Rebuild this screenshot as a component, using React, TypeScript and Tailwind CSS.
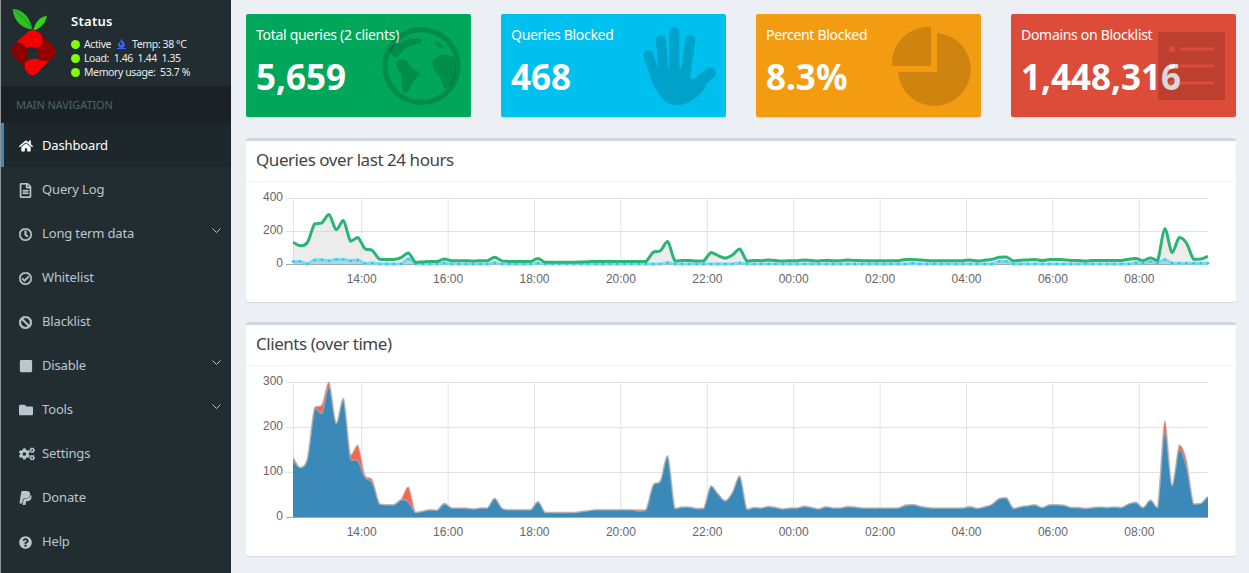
import { FaHome, FaRegFileAlt, FaRegClock, FaRegCheckCircle, FaBan, FaStop, FaFolder, FaCogs, FaPaypal, FaQuestionCircle, FaFire } from 'react-icons/fa'
import type { ReactNode } from 'react'

const X0 = 293
const STEP = 915 / 127

// total queries per 10 minutes, read off the chart
const totals = [131, 110, 130, 243, 249, 300, 208, 263, 138, 160, 93, 82, 29, 27, 27, 39, 67, 10, 13, 16, 15, 30, 20, 20, 20, 18, 20, 20, 41, 19, 16, 16, 16, 16, 34, 10, 10, 10, 10, 10, 12, 14, 16, 16, 16, 16, 16, 16, 16, 16, 71, 80, 136, 19, 22, 22, 19, 19, 69, 51, 36, 55, 91, 17, 21, 20, 24, 21, 18, 20, 20, 24, 21, 18, 23, 20, 20, 24, 22, 20, 20, 20, 20, 20, 20, 27, 28, 24, 21, 20, 20, 20, 20, 20, 24, 19, 23, 28, 41, 43, 19, 23, 25, 27, 21, 27, 27, 26, 21, 21, 19, 21, 22, 21, 22, 21, 29, 33, 21, 37, 21, 214, 70, 160, 127, 29, 30, 45]

// the part of each total coming from the second client
const secondClient: Record<number, number> = { 0: 8, 3: 2, 4: 19, 5: 10, 8: 11, 9: 35, 10: 5, 11: 6, 16: 33, 48: 3, 66: 1, 77: 2, 85: 2, 94: 2, 121: 24, 123: 10, 124: 15 }

const blocked: Record<number, number> = { 0: 15, 1: 15, 3: 25, 4: 26, 5: 20, 6: 27, 7: 28, 8: 20, 9: 24, 10: 3, 11: 6, 16: 30, 21: 6, 28: 8, 34: 6, 52: 8, 62: 6, 86: 4, 98: 16, 99: 16, 117: 8, 118: 6, 119: 14, 120: 6, 121: 26, 122: 6, 123: 5, 124: 5, 125: 5, 126: 5, 127: 5 }

const hours = ['14:00', '16:00', '18:00', '20:00', '22:00', '00:00', '02:00', '04:00', '06:00', '08:00']

function smooth(pts: number[][]) {
  let d = `M${pts[0][0]} ${pts[0][1]}`
  for (let i = 0; i < pts.length - 1; i++) {
    const p0 = pts[Math.max(i - 1, 0)]
    const p1 = pts[i]
    const p2 = pts[i + 1]
    const p3 = pts[Math.min(i + 2, pts.length - 1)]
    const c1y = Math.min(Math.max(p1[1] + (p2[1] - p0[1]) / 6, Math.min(p1[1], p2[1])), Math.max(p1[1], p2[1]))
    const c2y = Math.min(Math.max(p2[1] - (p3[1] - p1[1]) / 6, Math.min(p1[1], p2[1])), Math.max(p1[1], p2[1]))
    d += `C${(p1[0] + STEP / 3).toFixed(1)} ${c1y.toFixed(1)} ${(p2[0] - STEP / 3).toFixed(1)} ${c2y.toFixed(1)} ${p2[0].toFixed(1)} ${p2[1].toFixed(1)}`
  }
  return d
}

function seriesPath(values: number[], base: number, scale: number) {
  return smooth(values.map((v, i) => [X0 + i * STEP, base - v * scale]))
}

function area(d: string, base: number) {
  return `${d}L${X0 + 127 * STEP} ${base}L${X0} ${base}Z`
}

// svg coordinates below are page x, and y relative to the chart's own top
function Axes({ base, ticks, top, labelY }: { base: number; ticks: { label: string; y: number }[]; top: number; labelY: number }) {
  return (
    <>
      {ticks.map((t) => (
        <g key={t.label}>
          <line x1="286" x2="1208" y1={t.y + 0.5} y2={t.y + 0.5} stroke={t.label === '0' ? '#a8a8a8' : '#e2e2e2'} />
          <text x="283" y={t.y + 3} textAnchor="end" fontSize="12" fill="#666">{t.label}</text>
        </g>
      ))}
      <line x1={X0 + 0.5} x2={X0 + 0.5} y1={top} y2={base} stroke="#e2e2e2" />
      {hours.map((h, i) => {
        const x = 361.7 + i * 86.4
        return (
          <g key={h}>
            <line x1={x} x2={x} y1={top} y2={base} stroke="#e2e2e2" />
            <text x={x} y={labelY} textAnchor="middle" fontSize="12" fill="#666">{h}</text>
          </g>
        )
      })}
    </>
  )
}

function QueriesChart() {
  const base = 82
  const scale = 0.165
  const line = seriesPath(totals, base, scale)
  const blockedValues = totals.map((_, i) => blocked[i] ?? 0)
  const blockedLine = seriesPath(blockedValues, base, scale)
  return (
    <svg viewBox="246 0 990 120" className="block h-[120px] w-full" style={{ fontFamily: '"Liberation Sans", sans-serif' }}>
      <Axes base={base} top={16} labelY={101} ticks={[{ label: '400', y: 16 }, { label: '200', y: 49 }, { label: '0', y: 82 }]} />
      <path d={area(line, base)} fill="rgba(210,210,210,0.42)" />
      <path d={area(blockedLine, base)} fill="rgba(0,192,239,0.32)" />
      <path d={blockedLine} fill="none" stroke="#7dd8ee" strokeWidth="3" />
      {blockedValues.map((v, i) => (
        <circle key={i} cx={X0 + i * STEP} cy={base - v * scale} r="1.2" fill="#1ec8f0" />
      ))}
      <path d={line} fill="none" stroke="#2bb574" strokeWidth="3" strokeLinejoin="round" />
    </svg>
  )
}

function ClientsChart() {
  const base = 151
  const scale = 0.45
  const first = totals.map((v, i) => v - (secondClient[i] ?? 0))
  const red = seriesPath(totals, base, scale)
  const blue = seriesPath(first, base, scale)
  return (
    <svg viewBox="246 0 990 190" className="block h-[190px] w-full" style={{ fontFamily: '"Liberation Sans", sans-serif' }}>
      <Axes base={base} top={16} labelY={170} ticks={[{ label: '300', y: 16 }, { label: '200', y: 61 }, { label: '100', y: 106 }, { label: '0', y: 151 }]} />
      <path d={area(red, base)} fill="#f5664f" />
      <path d={area(blue, base)} fill="#3a89b8" />
      <path d={red} fill="none" stroke="rgba(190,190,190,0.55)" strokeWidth="1.5" />
      <path d={blue} fill="none" stroke="rgba(180,180,180,0.6)" strokeWidth="1.5" />
    </svg>
  )
}

function PiLogo() {
  return (
    <svg viewBox="30 25 140 205" className="h-[68px] w-[47px] shrink-0">
      <path d="M37 28C70 30 90 55 97 90C60 85 40 60 37 28Z" fill="#2fbf25" />
      <path d="M42 33C65 48 82 66 95 88" stroke="#17801a" strokeWidth="2" fill="none" />
      <path d="M100 92C105 65 120 52 140 48C138 70 120 88 100 92Z" fill="#33d41f" />
      <path d="M48 128L85 95C100 88 125 95 127 120C127 135 120 145 112 148C100 140 85 140 78 145C75 135 60 128 48 128Z" fill="#f40000" />
      <path d="M125 108L160 142C172 155 168 170 155 178C145 186 128 186 118 180C115 170 112 155 112 148C122 142 130 130 125 108Z" fill="#950000" />
      <path d="M118 180C125 185 135 185 148 183L110 222C98 232 85 228 78 215C72 205 72 195 75 188C85 178 105 175 118 180Z" fill="#f80000" />
      <path d="M48 130C60 128 75 135 78 145C85 160 82 175 75 188C72 195 72 200 75 205L42 172C30 160 30 145 48 130Z" fill="#8c0000" />
    </svg>
  )
}

function Dot() {
  return <span className="mr-[4px] inline-block h-[9px] w-[9px] shrink-0 rounded-full bg-[#7fff00]" />
}

function Chevron() {
  return (
    <svg viewBox="0 0 9 6" className="-mt-[7px] h-[6px] w-[9px]">
      <path d="M0.500 0.500L4.500 4.500L8.500 0.500" fill="none" stroke="currentColor" strokeWidth="1" />
    </svg>
  )
}

const navItems: { label: string; icon: ReactNode; arrow?: boolean; active?: boolean }[] = [
  { label: 'Dashboard', icon: <FaHome className="h-[14px] w-[14px]" />, active: true },
  { label: 'Query Log', icon: <FaRegFileAlt className="h-[15px] w-[13px] stroke-[10]" /> },
  { label: 'Long term data', icon: <FaRegClock className="h-[13px] w-[13px] stroke-[24]" />, arrow: true },
  { label: 'Whitelist', icon: <FaRegCheckCircle className="h-[13px] w-[13px] stroke-[24]" /> },
  { label: 'Blacklist', icon: <FaBan className="h-[13px] w-[13px] stroke-[24]" /> },
  { label: 'Disable', icon: <FaStop className="h-[14px] w-[14px]" />, arrow: true },
  { label: 'Tools', icon: <FaFolder className="h-[14px] w-[14px]" />, arrow: true },
  { label: 'Settings', icon: <FaCogs className="h-[16px] w-[16px]" /> },
  { label: 'Donate', icon: <FaPaypal className="h-[16px] w-[13px]" /> },
  { label: 'Help', icon: <FaQuestionCircle className="h-[13px] w-[13px]" /> },
]

function Sidebar() {
  return (
    <aside className="w-[231px] shrink-0 self-stretch border-l border-[#8f9599] bg-[#222d32]">
      <div className="flex h-[86px] pt-[8px] pl-[9px]">
        <PiLogo />
        <div className="ml-[14px] text-white">
          <p className="mt-[5px] text-[13px] leading-[16px] font-semibold tracking-[0.3px]">Status</p>
          <div className="mt-[8px] text-[10.5px] leading-[14px] tracking-[-0.4px] text-[#e8ecee]">
            <p className="flex items-center whitespace-nowrap"><Dot />Active<FaFire className="mx-[6px] h-[10px] w-[9px] border-b border-[#3366ff] text-[#3366ff]" />Temp: 38 °C</p>
            <p className="flex items-center whitespace-nowrap"><Dot />Load:&nbsp; 1.46&nbsp; 1.44&nbsp; 1.35</p>
            <p className="flex items-center whitespace-nowrap"><Dot />Memory usage:&nbsp; 53.7 %</p>
          </div>
        </div>
      </div>
      <div className="h-[37px] bg-[#1a2226] pl-[15px] text-[11px] leading-[37px] tracking-[-0.1px] text-[#4b646f]">MAIN NAVIGATION</div>
      <nav>
        {navItems.map((item) => (
          <a
            key={item.label}
            className={`flex h-[44px] items-center border-l-[3px] pt-[2px] pr-[10px] pl-[15px] text-[13px] ${item.active ? 'border-[#3c8dbc] bg-[#1e282c] text-white' : 'border-transparent text-[#b8c7ce]'}`}
          >
            <span className="flex w-[23px] shrink-0 items-center">{item.icon}</span>
            <span className="flex-1 tracking-[-0.15px]">{item.label}</span>
            {item.arrow && <Chevron />}
          </a>
        ))}
      </nav>
    </aside>
  )
}

function StatBox({ title, value, color, icon }: { title: string; value: string; color: string; icon: ReactNode }) {
  return (
    <div className={`relative h-[103px] overflow-hidden rounded-[2px] px-[10px] pt-[11px] text-white shadow-[0_1px_1px_rgba(0,0,0,0.1)] ${color}`}>
      <p className="text-[14px] leading-[20px] tracking-[-0.3px] whitespace-nowrap">{title}</p>
      <p className="mt-[7px] text-[35px] leading-[50px] font-bold whitespace-nowrap">{value}</p>
      {icon}
    </div>
  )
}

function GlobeIcon() {
  return (
    <svg viewBox="425 66 238 236" className="absolute top-[13px] left-[136px] h-[79px] w-[79px]">
      <g fill="rgba(0,0,0,0.15)">
        <path fillRule="evenodd" d="M426 183a118 118 0 1 0 236 0a118 118 0 1 0-236 0ZM442 183a102 102 0 1 1 204 0a102 102 0 1 1-204 0Z" />
        <path d="M445 132C452 118 470 118 490 108C505 100 522 96 545 102C548 110 538 118 528 116C520 124 505 120 498 128C490 132 488 142 478 148C470 160 462 156 452 148Z" />
        <path d="M468 172C480 160 496 160 505 172C510 192 528 195 540 205C530 218 518 228 512 242C508 256 498 268 490 262C484 245 482 225 484 205C476 200 466 188 468 172Z" />
        <path d="M578 168C590 150 612 142 640 155C650 170 650 205 642 225C632 240 622 252 612 250C606 232 600 212 592 205C584 198 576 185 578 168Z" />
        <path d="M585 108C595 108 606 118 612 128C604 132 590 124 585 108Z" />
      </g>
    </svg>
  )
}

function HandIcon() {
  return (
    <svg viewBox="1205 60 230 245" className="absolute top-[11px] left-[140.700px] h-[81.700px] w-[76.700px] opacity-15">
      <g fill="#000" stroke="#000" strokeLinecap="round">
        <path d="M1245 240C1255 280 1280 300 1310 300C1350 300 1375 275 1400 240L1345 215L1345 190L1240 190Z" strokeWidth="0" />
        <line x1="1224" y1="150" x2="1255" y2="240" strokeWidth="30" fill="none" />
        <line x1="1262" y1="105" x2="1270" y2="210" strokeWidth="30" fill="none" />
        <line x1="1302" y1="82" x2="1302" y2="210" strokeWidth="30" fill="none" />
        <line x1="1350" y1="105" x2="1335" y2="210" strokeWidth="30" fill="none" />
        <line x1="1345" y1="258" x2="1410" y2="204" strokeWidth="34" fill="none" />
      </g>
    </svg>
  )
}

function PieIcon() {
  return (
    <svg viewBox="441 66 237 237" className="absolute top-[13px] left-[136px] h-[79px] w-[79px]">
      <g fill="rgba(0,0,0,0.15)">
        <path d="M558 66V183H441A109.500 109.500 0 0 1 558 66Z" />
        <path d="M576 201V84A109.500 109.500 0 1 1 459 201Z" />
      </g>
    </svg>
  )
}

function ListIcon() {
  return (
    <svg viewBox="0 0 67 68" className="absolute top-[18px] left-[147px] h-[68px] w-[67px]">
      <path fillRule="evenodd" d="M0 0H67V68H0ZM11 17a3 3 0 1 0 6 0a3 3 0 1 0-6 0ZM22 15.500V18.500H56V15.500ZM11 34a3 3 0 1 0 6 0a3 3 0 1 0-6 0ZM22 32.500V35.500H56V32.500ZM11 51a3 3 0 1 0 6 0a3 3 0 1 0-6 0ZM22 49.500V52.500H56V49.500Z" fill="rgba(0,0,0,0.15)" />
    </svg>
  )
}

function ChartBox({ title, children }: { title: string; children: ReactNode }) {
  return (
    <section className="rounded-[3px] border-t-[3px] border-[#d2d6de] bg-white shadow-[0_1px_1px_rgba(0,0,0,0.1)]">
      <h3 className="h-[41px] border-b border-[#f4f4f4] pl-[10px] text-[17px] leading-[38px] tracking-[-0.45px] text-[#444]">{title}</h3>
      {children}
    </section>
  )
}

export default function App() {
  return (
    <div className="flex h-[573px] overflow-hidden bg-[#ecf0f5]" style={{ fontFamily: '"Noto Sans", sans-serif' }}>
      <Sidebar />
      <main className="min-w-0 flex-1 pt-[14px] pr-[13px] pl-[15px]">
        <div className="grid grid-cols-4 gap-[30px]">
          <StatBox title="Total queries (2 clients)" value="5,659" color="bg-[#00a65a]" icon={<GlobeIcon />} />
          <StatBox title="Queries Blocked" value="468" color="bg-[#00c0ef]" icon={<HandIcon />} />
          <StatBox title="Percent Blocked" value="8.3%" color="bg-[#f39c12]" icon={<PieIcon />} />
          <StatBox title="Domains on Blocklist" value="1,448,316" color="bg-[#dd4b39]" icon={<ListIcon />} />
        </div>
        <div className="mt-[21px]">
          <ChartBox title="Queries over last 24 hours">
            <QueriesChart />
          </ChartBox>
        </div>
        <div className="mt-[20px]">
          <ChartBox title="Clients (over time)">
            <ClientsChart />
          </ChartBox>
        </div>
      </main>
    </div>
  )
}
